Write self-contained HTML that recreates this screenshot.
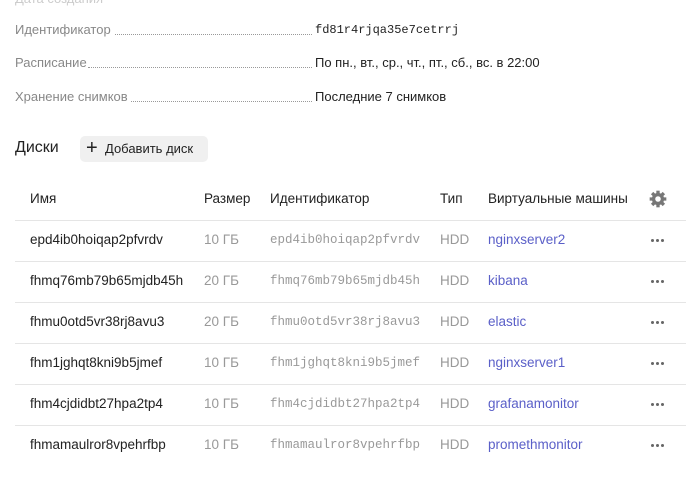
<!DOCTYPE html>
<html><head><meta charset="utf-8"><style>
body{margin:0;width:686px;height:483px;background:#fff;position:relative;overflow:hidden;font-family:"Liberation Sans",sans-serif;font-size:13px;color:#222}
.a{position:absolute;white-space:nowrap;line-height:16px}
.lbl{color:#888;}
.dots{position:absolute;height:1px;border-bottom:1px dotted #999}
.mono{font-family:"Liberation Mono",monospace;font-size:12px}
.hr{position:absolute;left:15px;width:671px;height:1px;background:#e5e5e5}
.g{color:#999}
.ln{color:#5a5fc8}
.t{font-size:13.5px}
.dt{position:absolute;left:650px;width:16px;height:4px}
.dt i{position:absolute;top:0;width:3px;height:3px;border-radius:50%;background:#666}
</style></head><body>
<div class="a lbl" style="left:15px;top:-9px;color:#ccc">Дата создания</div>
<div class="a lbl" style="left:15px;top:22px">Идентификатор</div><div class="dots" style="left:115px;width:197px;top:33px"></div>
<div class="a mono" style="left:315px;top:22px">fd81r4rjqa35e7cetrrj</div>
<div class="a lbl" style="left:15px;top:55px">Расписание</div><div class="dots" style="left:88px;width:224px;top:66px"></div>
<div class="a" style="left:315px;top:55px">По пн., вт., ср., чт., пт., сб., вс. в 22:00</div>
<div class="a lbl" style="left:15px;top:89px">Хранение снимков</div><div class="dots" style="left:131px;width:181px;top:100px"></div>
<div class="a" style="left:315px;top:89px">Последние 7 снимков</div>
<div class="a" style="left:15px;top:139px;font-size:16px;line-height:18px">Диски</div>
<div style="position:absolute;left:80px;top:136px;width:128px;height:26px;background:#f0f0f0;border-radius:5px"></div>
<div class="a" style="left:86px;top:139px;font-size:20px;line-height:18px">+</div>
<div class="a" style="left:105px;top:141px">Добавить диск</div>
<div class="a t" style="left:30px;top:191px">Имя</div>
<div class="a t" style="left:204px;top:191px">Размер</div>
<div class="a t" style="left:270px;top:191px">Идентификатор</div>
<div class="a t" style="left:440px;top:191px">Тип</div>
<div class="a t" style="left:488px;top:191px">Виртуальные машины</div>
<svg style="position:absolute;left:648px;top:189px" width="20" height="20" viewBox="0 0 18 18"><g fill="#777"><circle cx="9" cy="9" r="5.5"/><g stroke="#777" stroke-width="3"><line x1="9" y1="1.5" x2="9" y2="16.5"/><line x1="1.5" y1="9" x2="16.5" y2="9"/><line x1="3.7" y1="3.7" x2="14.3" y2="14.3"/><line x1="14.3" y1="3.7" x2="3.7" y2="14.3"/></g></g><circle cx="9" cy="9" r="2.5" fill="#fff"/></svg>
<div class="hr" style="top:220px"></div>
<div id="rows"></div>
<script>
var d=[["epd4ib0hoiqap2pfvrdv","10 ГБ","nginxserver2"],["fhmq76mb79b65mjdb45h","20 ГБ","kibana"],["fhmu0otd5vr38rj8avu3","20 ГБ","elastic"],["fhm1jghqt8kni9b5jmef","10 ГБ","nginxserver1"],["fhm4cjdidbt27hpa2tp4","10 ГБ","grafanamonitor"],["fhmamaulror8vpehrfbp","10 ГБ","promethmonitor"]];
var h="";d.forEach(function(r,i){var y=232+i*41;
h+='<div class="a t" style="left:30px;top:'+y+'px">'+r[0]+'</div><div class="a g t" style="left:204px;top:'+y+'px">'+r[1]+'</div><div class="a mono g" style="left:270px;top:'+y+'px;font-size:12.5px">'+r[0]+'</div><div class="a g t" style="left:440px;top:'+y+'px">HDD</div><div class="a ln t" style="left:488px;top:'+y+'px">'+r[2]+'</div><div class="dt" style="top:'+(y+7)+'px"><i style="left:1px"></i><i style="left:6px"></i><i style="left:11px"></i></div>';
if(i<5)h+='<div class="hr" style="top:'+(261+i*41)+'px"></div>';});
document.getElementById("rows").innerHTML=h;
</script>
</body></html>
